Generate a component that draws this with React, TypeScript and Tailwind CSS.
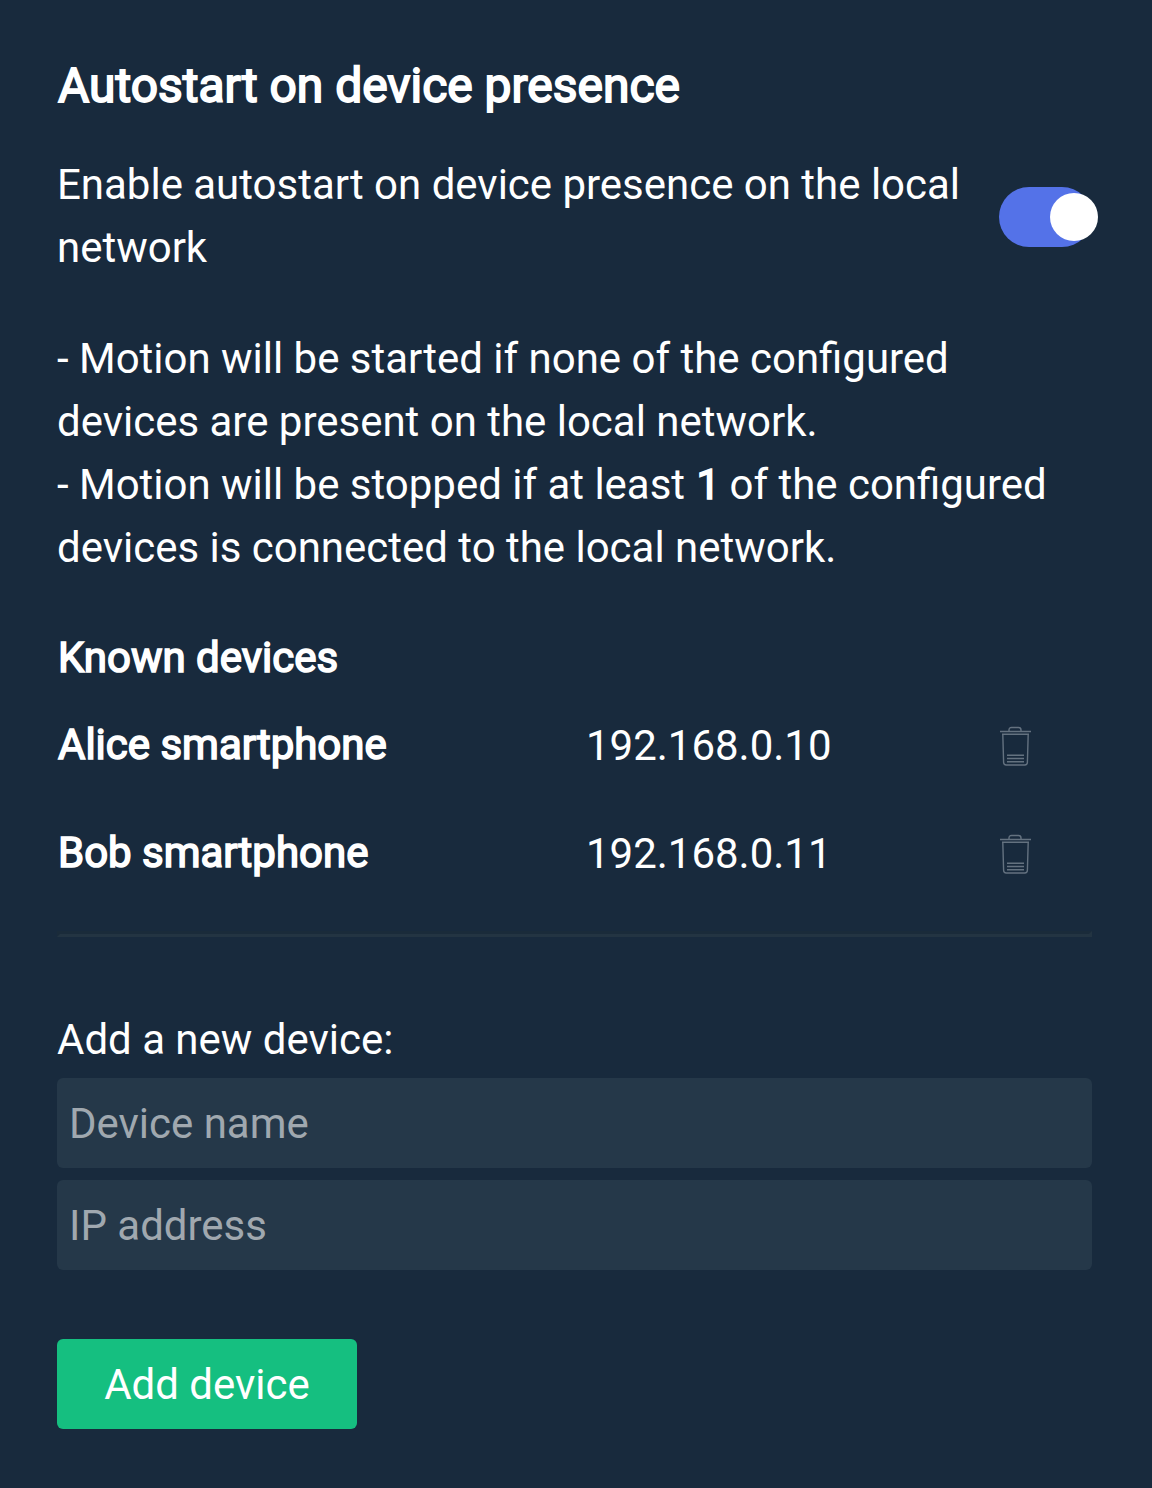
const Trash = () => (
  <svg className="block h-10 w-8" viewBox="0 0 32 40" fill="none" stroke="#647280" strokeWidth="1.4" strokeLinejoin="round">
    <path d="M0 5.500h31M9 5.500V4q0-2.500 2.500-2.500h7q2.500 0 2.500 2.500v1.500M2 8.300h27M2.800 8.300l.8 28q.1 2.700 2.600 2.700h18.600q2.500 0 2.600-2.700l.8-28M7 29.300h17M7 32.500h17M7 35.800h17" />
  </svg>
);

const devices = [
  { name: "Alice smartphone", ip: "192.168.0.10" },
  { name: "Bob smartphone", ip: "192.168.0.11" },
];

export default function App() {
  return (
    <main className="h-[1488px] w-[1152px] bg-[#182a3d] pl-[57px] pr-[60px] pt-[50px] font-['Roboto',sans-serif] text-[41.97px] leading-[63px] text-white">
      <h1 className="h-[72px] pl-px text-[47.95px] leading-[72px] font-normal [-webkit-text-stroke:1.8px_white]">Autostart on device presence</h1>
      <div className="mt-[31px] flex h-[126px] items-center justify-between">
        <p className="w-[920px]">Enable autostart on device presence on the local network</p>
        <button aria-label="Autostart" className="mt-0.5 flex h-[60px] w-[93px] items-center justify-end rounded-full bg-[#5472e8]">
          <span className="-mr-1.5 size-12 shrink-0 rounded-full bg-white" />
        </button>
      </div>
      <p className="mt-12">- Motion will be started if none of the configured<br />devices are present on the local network.<br />- Motion will be stopped if at least <b className="-mr-px pl-px font-normal [-webkit-text-stroke:1.6px_white]">1</b> of the configured<br />devices is connected to the local network.</p>
      <h2 className="mt-[47px] pl-px font-normal [-webkit-text-stroke:1.6px_white]">Known devices</h2>
      <div className="mt-[25px] flex flex-col gap-[45px]">
        {devices.map((d) => (
          <div key={d.ip} className="flex h-[63px] items-center">
            <b className="-mt-0.5 w-[529px] pl-px font-normal [-webkit-text-stroke:1.6px_white]">{d.name}</b>
            <span className="w-[414px]">{d.ip}</span>
            <Trash />
          </div>
        ))}
      </div>
      <hr className="mt-[46px] h-1.5 border-[3px] border-t-[#1a2b3a] border-r-[#233442] border-b-[#233442] border-l-[#1a2b3a]" />
      <p className="mt-[71px]">Add a new device:</p>
      <input className="mt-[7px] block h-[90px] w-full rounded-md bg-[#253849] px-3 placeholder:text-[#a0a8af]" placeholder="Device name" />
      <input className="mt-3 block h-[90px] w-full rounded-md bg-[#253849] px-3 placeholder:text-[#a0a8af]" placeholder="IP address" />
      <button className="mt-[69px] block h-[90px] w-[300px] rounded-md bg-[#15bf80]">Add device</button>
    </main>
  );
}
